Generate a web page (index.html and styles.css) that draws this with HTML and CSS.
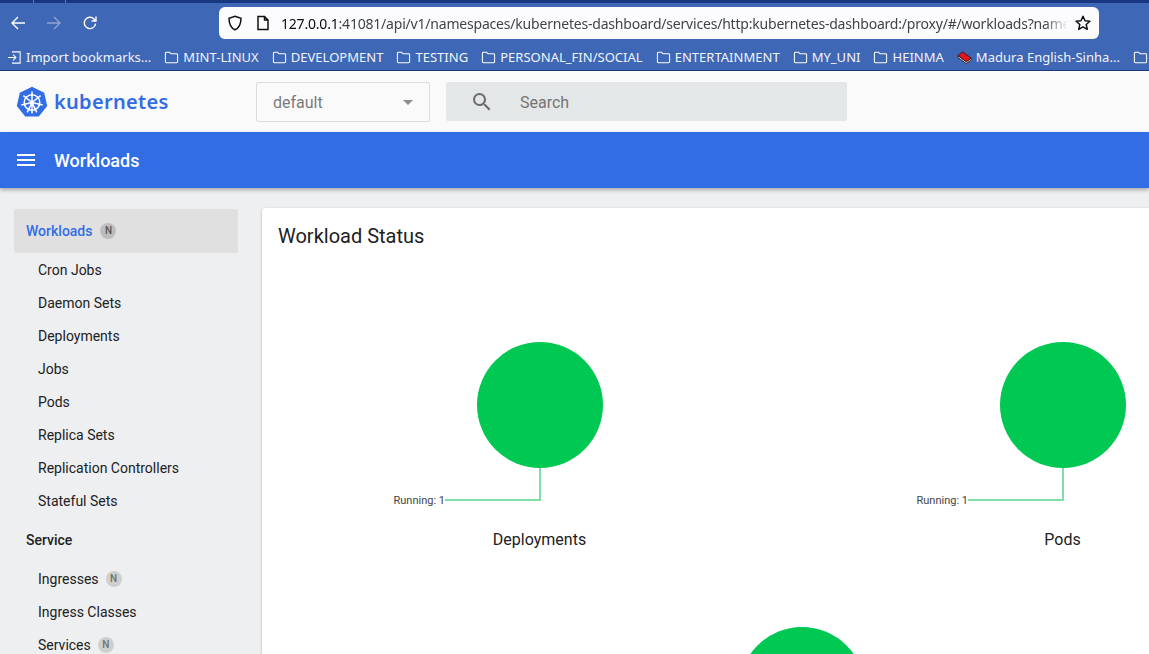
FILE: index.html
```html
<!DOCTYPE html>
<html lang="en">
<head>
<meta charset="UTF-8">
<meta name="viewport" content="width=device-width, initial-scale=1.0">
<title>Workloads - Kubernetes Dashboard</title>
<link rel="stylesheet" href="styles.css">
</head>
<body>

<div class="tabstrip">
  <span class="tab-edge"></span>
  <span class="tab-edge"></span>
</div>

<div class="browser-bar">
  <div class="nav-buttons">
    <svg class="nav-icon" viewBox="0 0 16 16"><path d="M15 8H2M8 2 2 8l6 6"/></svg>
    <svg class="nav-icon nav-icon-off" viewBox="0 0 16 16"><path d="M1 8h13M8 2l6 6-6 6"/></svg>
    <svg class="nav-icon" viewBox="0 0 16 16"><path d="M13.6 8.6A5.7 5.7 0 1 1 12 3.9L14 6M14 1.500V6H9.500"/></svg>
  </div>
  <div class="address">
    <svg class="addr-icon" viewBox="0 0 16 16"><path d="M8 1.200 14 3.200c0 5-1.500 9.500-6 11.600C3.500 12.700 2 8.200 2 3.200z"/></svg>
    <svg class="addr-icon addr-page" viewBox="0 0 16 16"><path d="M3 1.500h6.500L13 5v9.500H3zM9.500 1.500V5H13"/></svg>
    <div class="url"><b>127.0.0.1</b>:41081/api/v1/namespaces/kubernetes-dashboard/services/http:kubernetes-dashboard:/proxy/#/workloads?namespace=default</div>
    <svg class="addr-star" viewBox="0 0 16 16"><path d="m8 1.300 2 4.500 4.900.5-3.700 3.200 1.100 4.800L8 11.800l-4.300 2.500 1.100-4.800L1.100 6.300 6 5.800z"/></svg>
  </div>
</div>

<div class="bookmarks">
  <span class="bookmark">
    <svg class="bm-icon" viewBox="0 0 16 16"><path d="M6 3V2h8v12H6v-1M1 8h8M6.500 5 9.500 8l-3 3"/></svg>
    Import bookmarks...
  </span>
  <span class="bookmark"><svg class="bm-icon" viewBox="0 0 16 16"><path d="M1.500 3.500q0-1 1-1h3.500l1.500 1.500h6q1 0 1 1v7.500q0 1-1 1h-11q-1 0-1-1z"/></svg>MINT-LINUX</span>
  <span class="bookmark"><svg class="bm-icon" viewBox="0 0 16 16"><path d="M1.500 3.500q0-1 1-1h3.500l1.500 1.500h6q1 0 1 1v7.500q0 1-1 1h-11q-1 0-1-1z"/></svg>DEVELOPMENT</span>
  <span class="bookmark"><svg class="bm-icon" viewBox="0 0 16 16"><path d="M1.500 3.500q0-1 1-1h3.500l1.500 1.500h6q1 0 1 1v7.500q0 1-1 1h-11q-1 0-1-1z"/></svg>TESTING</span>
  <span class="bookmark"><svg class="bm-icon" viewBox="0 0 16 16"><path d="M1.500 3.500q0-1 1-1h3.500l1.500 1.500h6q1 0 1 1v7.500q0 1-1 1h-11q-1 0-1-1z"/></svg>PERSONAL_FIN/SOCIAL</span>
  <span class="bookmark"><svg class="bm-icon" viewBox="0 0 16 16"><path d="M1.500 3.500q0-1 1-1h3.500l1.500 1.500h6q1 0 1 1v7.500q0 1-1 1h-11q-1 0-1-1z"/></svg>ENTERTAINMENT</span>
  <span class="bookmark"><svg class="bm-icon" viewBox="0 0 16 16"><path d="M1.500 3.500q0-1 1-1h3.500l1.500 1.500h6q1 0 1 1v7.500q0 1-1 1h-11q-1 0-1-1z"/></svg>MY_UNI</span>
  <span class="bookmark"><svg class="bm-icon" viewBox="0 0 16 16"><path d="M1.500 3.500q0-1 1-1h3.500l1.500 1.500h6q1 0 1 1v7.500q0 1-1 1h-11q-1 0-1-1z"/></svg>HEINMA</span>
  <span class="bookmark">
    <svg class="bm-book" viewBox="0 0 16 16"><path fill="#fff" stroke="#222" stroke-width="1" d="M1 6v2l9 6.500 5-4v-2l-5 4z"/><path fill="#e0151d" stroke="#3a0a0a" stroke-width=".8" d="M1 6 6 2l9 6.500-5 4z"/></svg>
    Madura English-Sinha...
  </span>
  <span class="bookmark"><svg class="bm-icon" viewBox="0 0 16 16"><path d="M1.500 3.500q0-1 1-1h3.500l1.500 1.500h6q1 0 1 1v7.500q0 1-1 1h-11q-1 0-1-1z"/></svg></span>
</div>

<header class="app-header">
  <div class="brand">
    <svg class="brand-logo" viewBox="0 0 32 32">
      <path class="logo-hept" d="M16 .8 28.200 6.700 31.200 19.900 22.800 30.500H9.200L.8 19.900 3.800 6.700z"/>
      <g class="logo-wheel">
        <circle cx="16" cy="16.500" r="7.800"/>
        <path d="M16 5.500v22M16 16.500 7.400 9.600M16 16.500l8.600-6.900M16 16.500 5.300 19M16 16.500 26.700 19M16 16.500l-4.800 9.900M16 16.500l4.800 9.900"/>
        <circle class="logo-hub" cx="16" cy="16.500" r="2"/>
      </g>
    </svg>
    <span class="brand-name">kubernetes</span>
  </div>
  <div class="ns-select">
    <span>default</span>
    <span class="ns-caret"></span>
  </div>
  <div class="search">
    <svg class="search-icon" viewBox="0 0 24 24"><path d="M15.500 14h-.79l-.28-.27A6.470 6.470 0 0 0 16 9.500 6.500 6.500 0 1 0 9.500 16c1.610 0 3.090-.59 4.230-1.570l.27.28v.79l5 4.990L20.490 19l-4.990-5zm-6 0C7.010 14 5 11.990 5 9.500S7.010 5 9.500 5 14 7.010 14 9.500 11.990 14 9.500 14z"/></svg>
    <span>Search</span>
  </div>
</header>

<div class="toolbar">
  <svg class="menu-icon" viewBox="0 0 24 24"><path d="M3 18h18v-2H3v2zm0-5h18v-2H3v2zm0-7v2h18V6H3z"/></svg>
  <span class="toolbar-title">Workloads</span>
</div>

<div class="main">
  <nav class="sidenav">
    <a class="nav-head nav-selected">Workloads <i class="badge">N</i></a>
    <a class="nav-item">Cron Jobs</a>
    <a class="nav-item">Daemon Sets</a>
    <a class="nav-item">Deployments</a>
    <a class="nav-item">Jobs</a>
    <a class="nav-item">Pods</a>
    <a class="nav-item">Replica Sets</a>
    <a class="nav-item">Replication Controllers</a>
    <a class="nav-item">Stateful Sets</a>
    <a class="nav-head nav-group">Service</a>
    <a class="nav-item">Ingresses <i class="badge">N</i></a>
    <a class="nav-item">Ingress Classes</a>
    <a class="nav-item">Services <i class="badge">N</i></a>
  </nav>

  <section class="card">
    <h2 class="card-title">Workload Status</h2>
    <div class="charts">
      <div class="chart">
        <svg class="pie" viewBox="0 0 523 248">
          <path class="pie-line" d="M262 196v32h-95"/>
          <circle class="pie-slice" cx="262" cy="133" r="63"/>
          <text class="pie-label" x="167" y="232" text-anchor="end">Running: 1</text>
        </svg>
        <div class="chart-name">Deployments</div>
      </div>
      <div class="chart">
        <svg class="pie" viewBox="0 0 523 248">
          <path class="pie-line" d="M262 196v32h-95"/>
          <circle class="pie-slice" cx="262" cy="133" r="63"/>
          <text class="pie-label" x="167" y="232" text-anchor="end">Running: 1</text>
        </svg>
        <div class="chart-name">Pods</div>
      </div>
      <div class="chart">
        <svg class="pie" viewBox="0 0 523 248">
          <path class="pie-line" d="M262 196v32h-95"/>
          <circle class="pie-slice" cx="262" cy="133" r="63"/>
          <text class="pie-label" x="167" y="232" text-anchor="end">Running: 1</text>
        </svg>
        <div class="chart-name">Replica Sets</div>
      </div>
    </div>
  </section>
</div>

</body>
</html>
```

FILE: styles.css
```css
html, body {
  margin: 0;
  padding: 0;
  height: 654px;
  overflow: hidden;
}
body {
  font-family: Roboto, Arial, sans-serif;
  display: flex;
  flex-direction: column;
  background: #edeff1;
  color: #212121;
}

/* browser chrome */
.tabstrip {
  height: 3px;
  background: #173781;
  display: flex;
  flex-shrink: 0;
  gap: 31px;
  padding-left: 33px;
}
.tab-edge {
  width: 1px;
  background: #5d79b3;
}
.browser-bar {
  height: 38px;
  background: #3e67b5;
  display: flex;
  flex-shrink: 0;
  align-items: flex-start;
  padding-top: 4px;
  box-sizing: border-box;
}
.nav-buttons {
  width: 219px;
  height: 32px;
  display: flex;
  align-items: center;
  gap: 20px;
  padding-left: 10px;
  box-sizing: border-box;
}
.nav-icon {
  width: 16px;
  height: 16px;
  fill: none;
  stroke: #fff;
  stroke-width: 1.400;
}
.nav-icon-off {
  stroke: #8ea5d3;
}
.address {
  width: 880px;
  height: 32px;
  background: #fcfcfe;
  border-radius: 6px;
  display: flex;
  align-items: center;
  padding-left: 8px;
  box-sizing: border-box;
  color: #3f4448;
}
.addr-icon {
  width: 16px;
  height: 16px;
  fill: none;
  stroke: #111;
  stroke-width: 1.500;
  flex-shrink: 0;
}
.addr-page {
  margin-left: 12px;
}
.url {
  font: 14px "Noto Sans", sans-serif;
  letter-spacing: -0.200px;
  margin-left: 10px;
  width: 787px;
  white-space: nowrap;
  overflow: hidden;
  -webkit-mask-image: linear-gradient(to right, #000 97%, transparent);
  mask-image: linear-gradient(to right, #000 97%, transparent);
}
.url b {
  font-weight: 400;
  color: #0b0b0b;
}
.addr-star {
  width: 16px;
  height: 16px;
  fill: none;
  stroke: #111;
  stroke-width: 1.500;
  stroke-linejoin: round;
  flex-shrink: 0;
  margin-left: 7px;
}
.bookmarks {
  height: 30px;
  background: #3e67b5;
  border-bottom: 1px solid #1d3a78;
  display: flex;
  flex-shrink: 0;
  align-items: center;
  gap: 13px;
  padding-left: 7px;
  padding-top: 3px;
  box-sizing: border-box;
  color: #f2f4fa;
  font: 13px "Noto Sans", sans-serif;
  letter-spacing: 0.020px;
  white-space: nowrap;
}
.bookmark {
  display: flex;
  align-items: center;
  gap: 4px;
}
.bm-icon {
  width: 15px;
  height: 15px;
  fill: none;
  stroke: #fff;
  stroke-width: 1.100;
}
.bm-book {
  width: 15px;
  height: 15px;
}

/* dashboard header */
.app-header {
  height: 61px;
  background: #fafafa;
  display: flex;
  flex-shrink: 0;
  align-items: center;
  box-sizing: border-box;
  padding-left: 16px;
}
.brand {
  width: 240px;
  display: flex;
  align-items: center;
  gap: 6px;
}
.brand-logo {
  width: 32px;
  height: 32px;
}
.logo-hept {
  fill: #326de6;
}
.logo-wheel {
  fill: none;
  stroke: #fff;
  stroke-width: 1.500;
}
.logo-hub {
  fill: #fff;
  stroke: none;
}
.brand-name {
  color: #326de6;
  font: 600 20px "Noto Sans", sans-serif;
  letter-spacing: 0.300px;
}
.ns-select {
  width: 174px;
  height: 40px;
  border: 1px solid #dcdcdc;
  border-radius: 2px;
  box-sizing: border-box;
  display: flex;
  align-items: center;
  justify-content: space-between;
  padding: 2px 16px 0;
  color: #7a7a7a;
  font-size: 16px;
}
.ns-caret {
  border-left: 5px solid transparent;
  border-right: 5px solid transparent;
  border-top: 5px solid #8c8c8c;
}
.search {
  width: 401px;
  height: 39px;
  margin-left: 16px;
  background: #e4e7e7;
  border-radius: 2px;
  display: flex;
  align-items: center;
  color: #757575;
  font-size: 16px;
}
.search span {
  padding-top: 2px;
}
.search-icon {
  width: 24px;
  height: 24px;
  margin-left: 24px;
  margin-right: 26px;
  fill: #6a6a6a;
}
.toolbar {
  height: 56px;
  background: #326de6;
  color: #fff;
  display: flex;
  flex-shrink: 0;
  align-items: center;
  padding-left: 14px;
  box-shadow: 0 2px 4px rgba(0, 0, 0, .3);
  position: relative;
}
.menu-icon {
  width: 24px;
  height: 24px;
  fill: #fff;
}
.toolbar-title {
  font-size: 18px;
  font-weight: 500;
  margin-left: 16px;
}

/* content */
.main {
  display: flex;
  flex: 1;
  min-height: 0;
}
.sidenav {
  width: 262px;
  flex-shrink: 0;
  padding: 21px 24px 0 14px;
  box-sizing: border-box;
  font-size: 14px;
}
.nav-head {
  height: 44px;
  display: flex;
  align-items: center;
  padding-left: 12px;
  font-weight: 500;
  color: #212121;
}
.nav-group {
  margin-top: 1px;
}
.nav-selected {
  background: #e0e0e0;
  color: #326de6;
  border-radius: 2px;
  padding-bottom: 1px;
  box-sizing: border-box;
}
.nav-item {
  height: 33px;
  display: flex;
  align-items: center;
  padding-left: 24px;
  color: #212121;
}
.badge {
  width: 16px;
  height: 16px;
  margin-left: 7px;
  border-radius: 50%;
  background: #cfcfcf;
  color: #6f6f6f;
  font-size: 10px;
  font-style: normal;
  font-weight: 500;
  display: flex;
  align-items: center;
  justify-content: center;
}
.nav-selected .badge {
  margin-left: 8px;
  background: #bdbdbd;
  color: #555;
}
.card {
  width: 1078px;
  flex-shrink: 0;
  height: 700px;
  margin-top: 20px;
  background: #fff;
  border-radius: 4px 0 0 0;
  box-shadow: 0 1px 3px rgba(0, 0, 0, .25);
  box-sizing: border-box;
  padding: 16px;
}
.card-title {
  margin: 0 0 24px;
  font-size: 20px;
  font-weight: 400;
  line-height: 24px;
}
.charts {
  display: flex;
  flex-wrap: wrap;
  justify-content: center;
}
.chart {
  width: 523px;
}
.pie {
  display: block;
  width: 523px;
  height: 248px;
}
.pie-slice {
  fill: #00c853;
}
.pie-line {
  fill: none;
  stroke: #7fe0a7;
  stroke-width: 2;
}
.pie-label {
  font-size: 11px;
  fill: #444;
}
.chart-name {
  height: 37px;
  line-height: 39px;
  text-align: center;
  font-size: 16px;
}
```
